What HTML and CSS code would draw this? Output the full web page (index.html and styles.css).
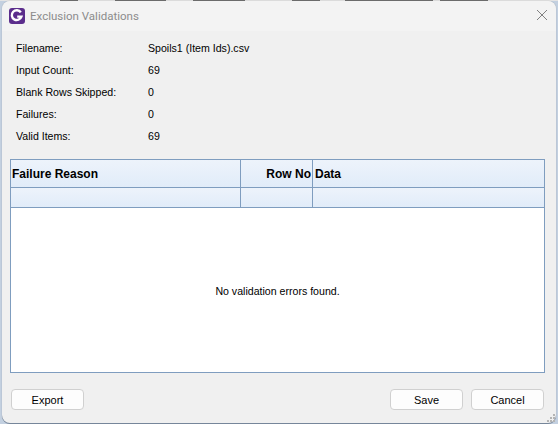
FILE: index.html
```html
<!DOCTYPE html>
<html>
<head>
    <title>Exclusion Validations</title>
    <link rel="stylesheet" href="styles.css">
</head>
<body>
    <div class="window">
        <div class="title-bar">
            <svg class="app-icon" width="16" height="16" viewBox="0 0 16 16">
                <rect width="16" height="16" rx="3" fill="#5b2d8c"/>
                <path d="M11.8 4.4 A4.9 4.9 0 1 0 12.4 8.6 H8.2" fill="none" stroke="#fff" stroke-width="2.4"/>
            </svg>
            <span class="title">Exclusion Validations</span>
            <svg class="close" width="10" height="10" viewBox="0 0 10 10">
                <path d="M0 0 L10 10 M10 0 L0 10" stroke="#808080" stroke-width="1"/>
            </svg>
        </div>
        <div class="content">
            <div class="summary">
                <span>Filename:</span><span>Spoils1 (Item Ids).csv</span>
                <span>Input Count:</span><span>69</span>
                <span>Blank Rows Skipped:</span><span>0</span>
                <span>Failures:</span><span>0</span>
                <span>Valid Items:</span><span>69</span>
            </div>
            <div class="table">
                <div class="row header-row">
                    <div class="cell reason">Failure Reason</div>
                    <div class="cell row-no">Row No</div>
                    <div class="cell data">Data</div>
                </div>
                <div class="row filter-row">
                    <div class="cell reason"></div>
                    <div class="cell row-no"></div>
                    <div class="cell data"></div>
                </div>
                <div class="empty">No validation errors found.</div>
            </div>
            <div class="buttons">
                <button type="button">Export</button>
                <div class="right-buttons">
                    <button type="button">Save</button>
                    <button type="button">Cancel</button>
                </div>
            </div>
        </div>
        <svg class="grip" width="8" height="8" viewBox="0 0 8 8" fill="#b4b4b4">
            <rect x="6" y="0" width="2" height="2"/>
            <rect x="3" y="3" width="2" height="2"/>
            <rect x="6" y="3" width="2" height="2"/>
            <rect x="0" y="6" width="2" height="2"/>
            <rect x="3" y="6" width="2" height="2"/>
            <rect x="6" y="6" width="2" height="2"/>
        </svg>
    </div>
</body>
</html>
```
FILE: styles.css
```css
html, body {
    margin: 0;
    height: 100%;
}

body {
    font-family: "Liberation Sans", Arial, sans-serif;
    font-size: 10.6px;
    color: #000;
    background: linear-gradient(90deg,
        #e4e4e4 60px, #707070 60px, #707070 78px,
        #e4e4e4 78px, #e4e4e4 115px, #707070 115px, #707070 166px,
        #e4e4e4 166px, #e4e4e4 193px, #707070 193px, #707070 245px,
        #e4e4e4 245px, #e4e4e4 292px, #707070 292px, #707070 320px,
        #e4e4e4 320px, #e4e4e4 345px, #707070 345px, #707070 433px,
        #e4e4e4 433px, #e4e4e4 440px, #707070 440px, #707070 488px,
        #e4e4e4 488px) top / 100% 1px no-repeat, #c3d0e0;
    overflow: hidden;
}

.window {
    position: relative;
    box-sizing: border-box;
    width: 554px;
    height: 422px;
    margin: 1px 0 0 2px;
    background-color: #f0f0f0;
    border-radius: 8px;
    box-shadow: 0 1px 0 #76869a, 0 0 1px rgba(0, 0, 0, 0.4);
}

.title-bar {
    display: flex;
    align-items: center;
    height: 30px;
    padding: 0 9px 0 7px;
    background-color: #f3f3f3;
    border-radius: 8px 8px 0 0;
}

.app-icon {
    margin-right: 5px;
}

.title {
    flex: 1;
    font-family: Roboto, Arial, sans-serif;
    font-size: 11.5px;
    color: #8c8c8c;
}

.close {
    margin-bottom: 2px;
}

.content {
    padding: 6px 11px 0 8px;
}

.summary {
    display: grid;
    grid-template-columns: 132px 1fr;
    grid-auto-rows: 22px;
    align-items: center;
    padding-left: 6px;
    height: 110px;
}

.table {
    display: flex;
    flex-direction: column;
    box-sizing: border-box;
    height: 214px;
    margin-top: 12px;
    border: 1px solid #7f9dbf;
    background-color: #fff;
}

.row {
    display: flex;
    background: linear-gradient(#edf3fb, #e1ecf9);
    border-bottom: 1px solid #7f9dbf;
}

.header-row {
    height: 27px;
    font-size: 12px;
    font-weight: bold;
}

.filter-row {
    height: 19px;
}

.cell {
    display: flex;
    align-items: center;
    box-sizing: border-box;
    padding: 0 1px;
    border-right: 1px solid #7f9dbf;
}

.reason {
    width: 230px;
}

.row-no {
    width: 72px;
    justify-content: flex-end;
}

.data {
    flex: 1;
    padding-left: 2px;
    border-right: none;
}

.empty {
    flex: 1;
    display: flex;
    align-items: center;
    justify-content: center;
    padding-top: 2px;
}

.buttons {
    display: flex;
    justify-content: space-between;
    margin-top: 16px;
    padding: 0 1px;
}

.right-buttons {
    display: flex;
    gap: 8px;
}

button {
    width: 73px;
    height: 21px;
    padding: 0;
    font: inherit;
    font-size: 11px;
    color: #000;
    background-color: #fdfdfd;
    border: 1px solid #d0d0d0;
    border-radius: 4px;
}

.grip {
    position: absolute;
    right: 1px;
    bottom: 1px;
}
```
